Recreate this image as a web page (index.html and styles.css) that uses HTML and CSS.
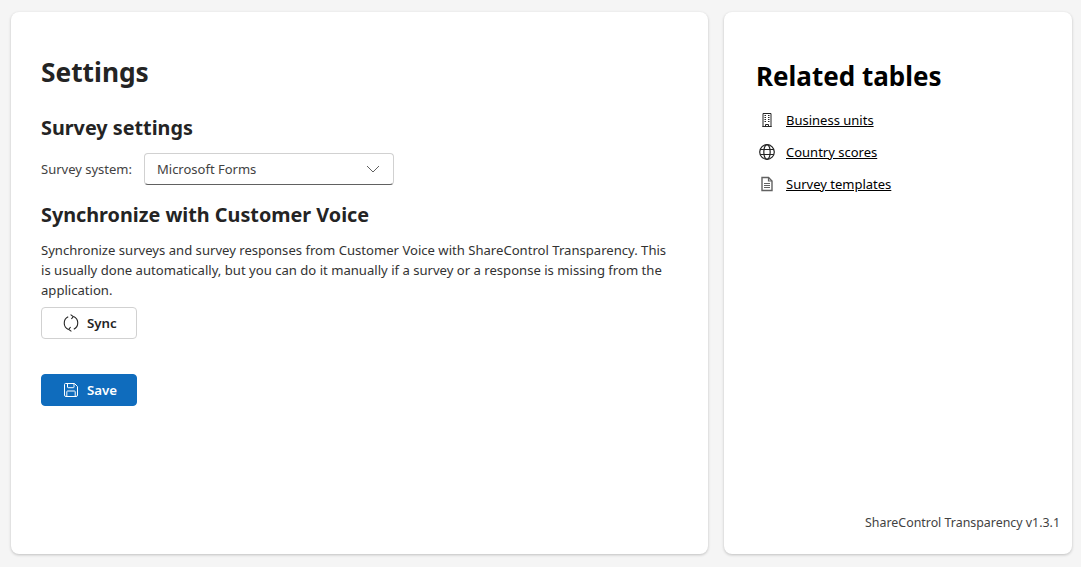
FILE: index.html
```html
<!DOCTYPE html>
<html lang="en">
<head>
    <meta charset="UTF-8">
    <title>Settings</title>
    <link rel="stylesheet" href="styles.css">
</head>
<body>
    <div class="page">
        <main class="card settings">
            <h1>Settings</h1>
            <h2>Survey settings</h2>
            <div class="field">
                <label class="field-label">Survey system:</label>
                <div class="dropdown">
                    <span>Microsoft Forms</span>
                    <svg class="chevron" width="14" height="14" viewBox="0 0 14 14"><path d="M1 4l6 6 6-6" fill="none" stroke="#616161" stroke-width="1"/></svg>
                </div>
            </div>
            <h2 class="sync-title">Synchronize with Customer Voice</h2>
            <p class="description">Synchronize surveys and survey responses from Customer Voice with ShareControl Transparency. This is usually done automatically, but you can do it manually if a survey or a response is missing from the application.</p>
            <button class="btn">
                <svg width="18" height="18" viewBox="0 0 18 18" fill="none" stroke="#242424" stroke-width="1.1"><path d="M6.200 2.800A7 7 0 0 0 6.400 15.500"/><path d="M11.800 15.200A7 7 0 0 0 11.600 2.500"/><path d="M8.600 0.600L11.300 2.500 9.400 5"/><path d="M9.400 17.400L6.700 15.500 8.600 13"/></svg>
                Sync
            </button>
            <button class="btn btn-primary">
                <svg width="16" height="16" viewBox="0 0 16 16" fill="none" stroke="#fff" stroke-width="1"><path d="M2.500 1.500h9l3 3v8.500a1.500 1.500 0 0 1-1.500 1.500H3a1.500 1.500 0 0 1-1.500-1.500V2.500a1 1 0 0 1 1-1z"/><path d="M4.500 1.500v3.500a.7.7 0 0 0 .7.7h5.100a.7.7 0 0 0 .7-.7V1.500"/><path d="M3.800 14.500V9.700a.7.7 0 0 1 .7-.7h7a.7.7 0 0 1 .7.7v4.800"/></svg>
                Save
            </button>
        </main>
        <aside class="card related">
            <h1 class="related-title">Related tables</h1>
            <ul class="links">
                <li>
                    <svg width="16" height="16" viewBox="0 0 16 16" fill="none" stroke="#242424"><path d="M4 15V1.500h8V15M6.500 15v-2.500h3V15M3.500 14.500h9"/><path d="M5.500 3.500h1.500M9 3.500h1.500M5.500 5.500h1.500M9 5.500h1.500M5.500 7.500h1.500M9 7.500h1.500M5.500 9.500h1.500M9 9.500h1.500" stroke-width="1.200"/></svg>
                    <a href="#">Business units</a>
                </li>
                <li>
                    <svg width="16" height="16" viewBox="0 0 16 16" fill="none" stroke="#242424" stroke-width="1.200"><circle cx="8" cy="8" r="7.300"/><ellipse cx="8" cy="8" rx="3.200" ry="7.300"/><path d="M1.200 5.500h13.600M1.200 10.500h13.600"/></svg>
                    <a href="#">Country scores</a>
                </li>
                <li>
                    <svg width="16" height="16" viewBox="0 0 16 16" fill="none" stroke="#616161"><path d="M3 1.500h6.500l3.500 3.500v9.500H3z" stroke-width="1.400"/><path d="M9.500 1.500V5H13M5 7.500h6M5 9.500h6M5 11.500h6" stroke-width="1.200"/></svg>
                    <a href="#">Survey templates</a>
                </li>
            </ul>
            <div class="version">ShareControl Transparency v1.3.1</div>
        </aside>
    </div>
</body>
</html>
```

FILE: styles.css
```css
body {
    margin: 0;
    background: #f5f5f5;
    font-family: 'Noto Sans', 'Open Sans', sans-serif;
    color: #242424;
}

.page {
    display: flex;
    gap: 16px;
    height: 567px;
    box-sizing: border-box;
    padding: 12px 9px 13px 11px;
}

.card {
    background: white;
    border-radius: 8px;
    box-shadow: 0 1px 3px rgba(0, 0, 0, 0.22);
    box-sizing: border-box;
}

.settings {
    width: 697px;
    padding: 43px 30px 0;
}

.related {
    flex: 1;
    padding: 47px 12px 23px 32px;
    display: flex;
    flex-direction: column;
}

h1 {
    margin: 0;
    font-size: 26.300px;
    line-height: 34px;
    font-weight: 700;
}

h2 {
    margin: 25px 0 0;
    font-size: 19.800px;
    line-height: 28px;
    font-weight: 700;
}

.field {
    display: flex;
    align-items: center;
    gap: 12px;
    margin-top: 11px;
}

.field-label {
    font-size: 13px;
    color: #424242;
}

.dropdown {
    width: 250px;
    height: 32px;
    box-sizing: border-box;
    display: flex;
    align-items: center;
    justify-content: space-between;
    padding: 0 13px 0 12px;
    border: 1px solid #d1d1d1;
    border-bottom-color: #616161;
    border-radius: 4px;
    font-size: 13px;
    color: #424242;
}

.sync-title {
    margin-top: 16px;
}

.description {
    width: 630px;
    margin: 11px 0 7px;
    font-size: 13.100px;
    line-height: 20px;
    color: #333;
}

.btn {
    display: flex;
    align-items: center;
    gap: 7px;
    width: 96px;
    height: 32px;
    padding: 0 0 0 20px;
    background: white;
    border: 1px solid #d1d1d1;
    border-radius: 4px;
    font-family: inherit;
    font-size: 13.300px;
    font-weight: 600;
    color: #242424;
}

.btn-primary {
    gap: 8px;
    margin-top: 35px;
    padding-left: 21px;
    background: #0f6cbd;
    border-color: #0f6cbd;
    color: white;
}

.related-title {
    font-size: 26px;
    color: #000;
}

.links {
    list-style: none;
    margin: 11px 0 0;
    padding: 0;
    flex: 1;
}

.links li {
    display: flex;
    align-items: center;
    gap: 11px;
    height: 32px;
    margin-left: 3px;
    font-size: 13px;
}

.links a {
    color: #000;
}

.version {
    text-align: right;
    font-size: 12.400px;
    color: #424242;
}
```
